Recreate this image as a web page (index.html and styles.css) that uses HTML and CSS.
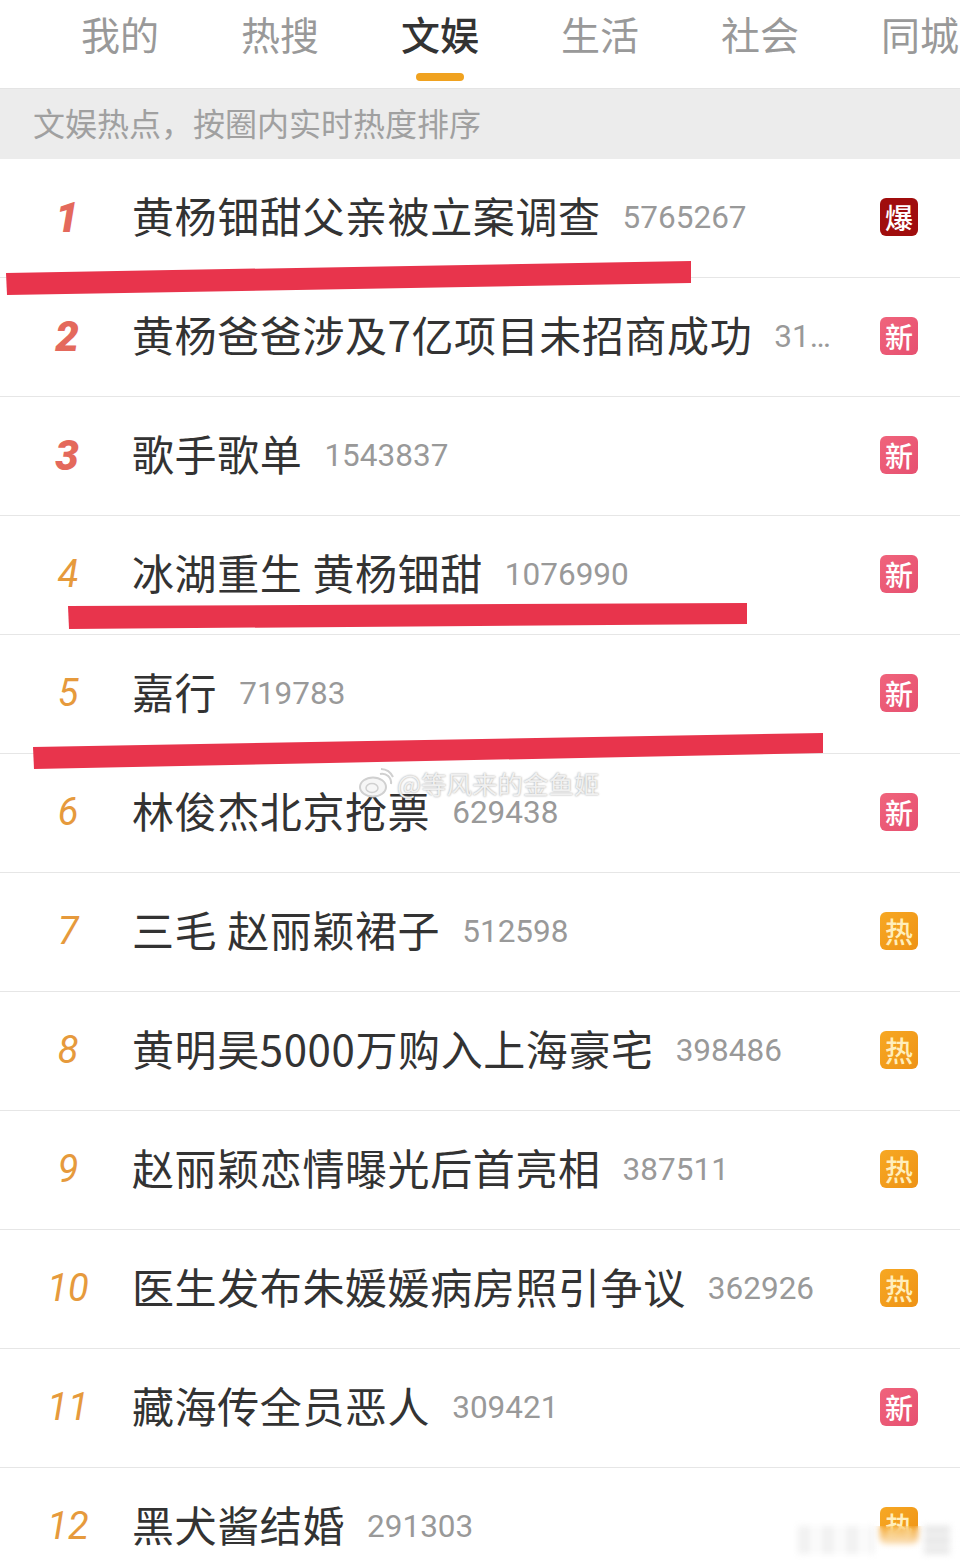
FILE: index.html
```html
<!DOCTYPE html>
<html lang="zh-CN">
<head>
    <meta charset="UTF-8">
    <title>微博热搜 文娱</title>
    <link rel="stylesheet" href="styles.css">
</head>
<body>
    <div class="page">
        <nav class="tabs">
            <div class="tab">我的</div>
            <div class="tab">热搜</div>
            <div class="tab active">文娱</div>
            <div class="tab">生活</div>
            <div class="tab">社会</div>
            <div class="tab">同城</div>
        </nav>
        <div class="subhead">文娱热点，按圈内实时热度排序</div>

        <ul class="list">
            <li class="row top"><span class="rank">1</span><span class="title">黄杨钿甜父亲被立案调查</span><span class="count">5765267</span><span class="tag boom">爆</span></li>
            <li class="row top"><span class="rank">2</span><span class="title">黄杨爸爸涉及7亿项目未招商成功</span><span class="count">31…</span><span class="tag new">新</span></li>
            <li class="row top"><span class="rank">3</span><span class="title">歌手歌单</span><span class="count">1543837</span><span class="tag new">新</span></li>
            <li class="row"><span class="rank">4</span><span class="title">冰湖重生 黄杨钿甜</span><span class="count">1076990</span><span class="tag new">新</span></li>
            <li class="row"><span class="rank">5</span><span class="title">嘉行</span><span class="count">719783</span><span class="tag new">新</span></li>
            <li class="row"><span class="rank">6</span><span class="title">林俊杰北京抢票</span><span class="count">629438</span><span class="tag new">新</span></li>
            <li class="row"><span class="rank">7</span><span class="title">三毛 赵丽颖裙子</span><span class="count">512598</span><span class="tag hot">热</span></li>
            <li class="row"><span class="rank">8</span><span class="title">黄明昊5000万购入上海豪宅</span><span class="count">398486</span><span class="tag hot">热</span></li>
            <li class="row"><span class="rank">9</span><span class="title">赵丽颖恋情曝光后首亮相</span><span class="count">387511</span><span class="tag hot">热</span></li>
            <li class="row"><span class="rank">10</span><span class="title">医生发布朱媛媛病房照引争议</span><span class="count">362926</span><span class="tag hot">热</span></li>
            <li class="row"><span class="rank">11</span><span class="title">藏海传全员恶人</span><span class="count">309421</span><span class="tag new">新</span></li>
            <li class="row"><span class="rank">12</span><span class="title">黑犬酱结婚</span><span class="count">291303</span><span class="tag hot">热</span></li>
        </ul>

        <!-- hand drawn marks on top of the screenshot -->
        <svg class="marks" width="960" height="1564" viewBox="0 0 960 1564">
            <polygon points="6,273 691,261 691,283 7,295" fill="#e8344c"/>
            <polygon points="68,606 747,603 747,624 69,629" fill="#e8344c"/>
            <polygon points="33,747 823,733 823,753 34,769" fill="#e8344c"/>
        </svg>

        <div class="watermark">
            <svg class="wm-logo" width="36" height="30" viewBox="0 0 36 30">
                <ellipse cx="15" cy="19" rx="13" ry="9.5" fill="#f6f6f6" stroke="#d0d0d0" stroke-width="2"/>
                <ellipse cx="14" cy="20" rx="6" ry="4.5" fill="none" stroke="#d0d0d0" stroke-width="1.5"/>
                <path d="M22 6a9 9 0 0 1 11 10M23 1a14 14 0 0 1 12 8" fill="none" stroke="#d0d0d0" stroke-width="2"/>
            </svg>
            <span>@等风来的金鱼姬</span>
        </div>
        <div class="smudge"></div>
        <div class="ghost ghost-left"></div>
        <div class="ghost ghost-right"></div>
    </div>
</body>
</html>
```

FILE: styles.css
```css
* {
    margin: 0;
    padding: 0;
    box-sizing: border-box;
}

body {
    background-color: #fff;
    font-family: "Noto Sans CJK SC", "Noto Sans", sans-serif;
}

.page {
    position: relative;
    width: 960px;
    height: 1564px;
    overflow: hidden;
}

.tabs {
    display: flex;
    height: 89px;
    padding-left: 40px;
    border-bottom: 1px solid #e4e4e4;
}

.tab {
    position: relative;
    flex: 0 0 160px;
    padding-top: 5px;
    text-align: center;
    font-size: 39px;
    line-height: 56px;
    color: #999;
}

.tab.active {
    color: #333;
    font-weight: 500;
}

.tab.active::after {
    content: "";
    position: absolute;
    left: 56px;
    bottom: 7px;
    width: 48px;
    height: 8px;
    border-radius: 4px;
    background-color: #f0a21f;
}

.subhead {
    height: 70px;
    padding-left: 33px;
    background-color: #ececec;
    font-size: 32px;
    line-height: 67px;
    color: #a0a0a0;
}

.list {
    list-style: none;
}

.row {
    display: flex;
    align-items: center;
    height: 119px;
    padding-right: 42px;
    padding-bottom: 2px;
    border-bottom: 1px solid #e6e6e6;
}

.rank {
    flex: 0 0 132px;
    padding-left: 4px;
    text-align: center;
    font-family: "Roboto", sans-serif;
    font-style: italic;
    font-size: 38px;
    color: #e69a3c;
}

.row.top .rank {
    padding-left: 2px;
    font-weight: 900;
    font-size: 42px;
    color: #e4695c;
}

.title {
    margin-top: -4px;
    font-size: 42px;
    line-height: 60px;
    letter-spacing: 0.6px;
    white-space: nowrap;
    color: #333;
}

.count {
    flex: 1;
    margin-left: 22px;
    font-family: "Roboto", sans-serif;
    font-size: 31.5px;
    color: #999;
}

.tag {
    flex: 0 0 38px;
    height: 38px;
    border-radius: 6px;
    text-align: center;
    font-size: 28px;
    font-weight: 500;
    line-height: 38px;
    color: #fff;
}

.tag.boom {
    background-color: #a00d0d;
}

.tag.new {
    background: linear-gradient(135deg, #f0647c, #e65070);
}

.tag.hot {
    background: linear-gradient(135deg, #f7a823, #ee9215);
    color: #ffeebb;
}

.marks {
    position: absolute;
    top: 0;
    left: 0;
}

.watermark {
    position: absolute;
    top: 766px;
    left: 358px;
    display: flex;
    align-items: center;
    gap: 3px;
    font-size: 25.5px;
    line-height: 34px;
    color: #f0f0f0;
    text-shadow: 0 0 2px #999;
}

.smudge {
    position: absolute;
    left: 840px;
    bottom: 0;
    width: 120px;
    height: 38px;
    background: linear-gradient(rgba(255, 255, 255, 0), #fff 70%);
    backdrop-filter: blur(3px);
}

/* blurred leftovers of the cropped site mark, bottom right */
.ghost {
    position: absolute;
    top: 1526px;
    height: 28px;
    filter: blur(3px);
}

.ghost-left {
    left: 798px;
    width: 76px;
    background: repeating-linear-gradient(90deg, #f1f1f1 0 12px, #fbfbfb 12px 24px);
}

.ghost-right {
    left: 924px;
    width: 26px;
    background: repeating-linear-gradient(#e6e6e6 0 7px, #f6f6f6 7px 11px);
}
```
